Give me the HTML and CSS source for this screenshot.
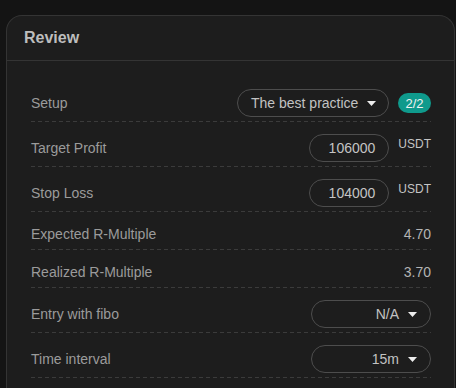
FILE: index.html
```html
<!DOCTYPE html>
<html>
<head>
<meta charset="utf-8">
<link rel="stylesheet" href="styles.css">
</head>
<body>
<div class="card">
  <div class="card-header">Review</div>
  <div class="card-body">
    <div class="row">
      <span class="label">Setup</span>
      <div class="right">
        <div class="select select-setup"><span class="sel-text">The best practice</span><svg class="caret" width="9" height="5" viewBox="0 0 9 5"><polygon points="0,0 9,0 4.5,5" fill="#ececec"/></svg></div>
        <span class="badge">2/2</span>
      </div>
    </div>
    <div class="row">
      <span class="label">Target Profit</span>
      <div class="right top">
        <div class="input">106000</div>
        <span class="unit">USDT</span>
      </div>
    </div>
    <div class="row">
      <span class="label">Stop Loss</span>
      <div class="right top">
        <div class="input">104000</div>
        <span class="unit">USDT</span>
      </div>
    </div>
    <div class="row">
      <span class="label">Expected R-Multiple</span>
      <span class="value">4.70</span>
    </div>
    <div class="row">
      <span class="label">Realized R-Multiple</span>
      <span class="value">3.70</span>
    </div>
    <div class="row">
      <span class="label">Entry with fibo</span>
      <div class="select select-small"><span class="sel-text">N/A</span><svg class="caret" width="9" height="5" viewBox="0 0 9 5"><polygon points="0,0 9,0 4.5,5" fill="#ececec"/></svg></div>
    </div>
    <div class="row">
      <span class="label">Time interval</span>
      <div class="select select-small"><span class="sel-text">15m</span><svg class="caret" width="9" height="5" viewBox="0 0 9 5"><polygon points="0,0 9,0 4.5,5" fill="#ececec"/></svg></div>
    </div>
  </div>
</div>
</body>
</html>
```
FILE: styles.css
```css
* { box-sizing: border-box; }
html, body { margin: 0; }
body {
  background: #141414;
  font-family: "Liberation Sans", Arial, sans-serif;
  padding: 15px 0 0 6px;
  height: 388px;
  overflow: hidden;
}
.card {
  width: 449px;
  height: 373px;
  background: #1d1d1d;
  border: 1px solid #343434;
  border-bottom: none;
  border-radius: 16px 16px 0 0;
  overflow: hidden;
}
.card-header {
  height: 45px;
  display: flex;
  align-items: center;
  padding: 0 17px;
  border-bottom: 1px solid #343434;
  font-size: 16px;
  font-weight: bold;
  color: #bdbdbd;
}
.card-body {
  padding: 16px 23px 0 24px;
}
.row {
  display: flex;
  justify-content: space-between;
  align-items: center;
  padding: 12px 0 5px;
  background: linear-gradient(to right, #3b3b3b 4px, transparent 4px) left bottom / 7px 1px repeat-x;
  min-height: 38px;
}
.label {
  font-size: 14px;
  line-height: 21px;
  color: #9b9b9b;
}
.value {
  font-size: 14px;
  line-height: 21px;
  color: #b4b4b4;
}
.right {
  display: flex;
  align-items: center;
  gap: 9px;
}
.right.top { align-items: flex-start; }
.select {
  height: 28px;
  border: 1px solid #4d4d4d;
  border-radius: 14px;
  display: flex;
  align-items: center;
  gap: 9px;
  font-size: 14px;
  color: #c2c2c2;
  padding-right: 13px;
  white-space: nowrap;
}
.sel-text { flex: none; }
.select-setup {
  width: 152px;
  padding-left: 13px;
}
.select-small {
  width: 120px;
  justify-content: flex-end;
}
.caret { display: block; flex: none; }
.badge {
  width: 33px;
  height: 20px;
  border-radius: 10px;
  background: #0f9a8c;
  color: #f2f2f2;
  font-size: 13px;
  display: flex;
  align-items: center;
  justify-content: center;
}
.input {
  width: 80px;
  height: 28px;
  border: 1px solid #4d4d4d;
  border-radius: 14px;
  display: flex;
  align-items: center;
  justify-content: flex-end;
  padding-right: 13px;
  font-size: 14px;
  color: #c4c4c4;
}
.unit {
  font-size: 12px;
  line-height: 14px;
  margin-top: 3px;
  color: #c4c4c4;
}
```
